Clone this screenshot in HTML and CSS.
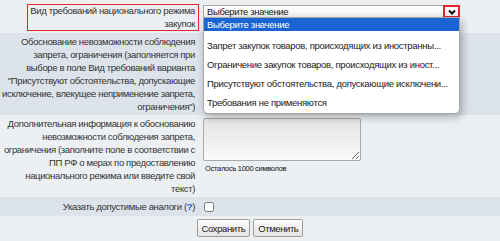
FILE: index.html
```html
<!DOCTYPE html>
<html lang="ru">
<head>
  <meta charset="UTF-8">
  <title>Национальный режим</title>
  <link rel="stylesheet" href="styles.css">
</head>
<body>

  <div class="form">
    <div class="row light first">
      <div class="label"><span class="mark">Вид требований национального режима закупок</span></div>
      <div class="field">
        <div class="select">
          <span class="select-value">Выберите значение</span>
          <span class="select-arrow">
            <svg width="8" height="6" viewBox="0 0 8 6"><polyline points="1,1.5 4,4.5 7,1.5" fill="none" stroke="#111" stroke-width="2"/></svg>
          </span>
          <ul class="options">
            <li class="selected">Выберите значение</li>
            <li>Запрет закупок товаров, происходящих из иностранны...</li>
            <li>Ограничение закупок товаров, происходящих из иност...</li>
            <li>Присутствуют обстоятельства, допускающие исключени...</li>
            <li>Требования не применяются</li>
          </ul>
        </div>
      </div>
    </div>

    <div class="row dark">
      <div class="label">Обоснование невозможности соблюдения запрета, ограничения (заполняется при выборе в поле Вид требований варианта "Присутствуют обстоятельства, допускающие исключение, влекущее неприменение запрета, ограничения")</div>
      <div class="field"></div>
    </div>

    <div class="row light">
      <div class="label">Дополнительная информация к обоснованию невозможности соблюдения запрета, ограничения (заполните поле в соответствии с ПП РФ о мерах по предоставлению национального режима или введите свой текст)</div>
      <div class="field">
        <textarea class="memo"></textarea>
        <div class="counter">Осталось 1000 символов</div>
      </div>
    </div>

    <div class="row dark short">
      <div class="label">Указать допустимые аналоги (<a href="#" class="help">?</a>)</div>
      <div class="field"><input type="checkbox" class="check"></div>
    </div>

    <div class="actions">
      <button>Сохранить</button>
      <button>Отменить</button>
    </div>
  </div>

</body>
</html>
```

FILE: styles.css
```css
body {
  margin: 0;
  background: #edf0f3;
  font-family: "Liberation Sans", Arial, sans-serif;
  font-size: 9.5px;
  letter-spacing: -0.36px;
  color: #333;
}

.row {
  display: flex;
  gap: 3px;
}

.light {
  background: #edf0f3;
}

.dark {
  background: #dde3ea;
}

.label {
  width: 200px;
  flex-shrink: 0;
  box-sizing: border-box;
  padding: 2px 5px 2px 2px;
  text-align: right;
  line-height: 13px;
}

.first .label {
  padding-top: 4px;
  padding-bottom: 2px;
  line-height: 12.5px;
}

.mark {
  display: inline-block;
  vertical-align: top;
  width: 167px;
  border: 1px solid #e3262d;
  padding: 0 3px 0 0;
  margin-right: -4px;
}

.field {
  flex: 1;
  position: relative;
}

.select {
  position: relative;
  width: 257px;
  height: 13px;
  margin-top: 5px;
  border: 1px solid #a8a8a8;
  box-sizing: border-box;
  background: linear-gradient(#fff, #f1f1f1);
}

.select-value {
  display: block;
  padding-left: 3px;
  line-height: 11px;
  color: #222;
}

.select-arrow {
  position: absolute;
  right: -1px;
  top: -1px;
  width: 17px;
  height: 13px;
  box-sizing: border-box;
  border: 2px solid #e3262d;
  display: flex;
  align-items: center;
  justify-content: center;
}

.options {
  position: absolute;
  z-index: 2;
  left: -1px;
  top: 11px;
  width: 255px;
  margin: 0;
  padding: 0 0 1px;
  list-style: none;
  background: #fff;
  border: 1px solid #a8a8a8;
  border-radius: 0 0 5px 5px;
  box-shadow: 2px 3px 9px rgba(0, 0, 0, 0.3);
  letter-spacing: -0.3px;
}

.options li {
  height: 19px;
  line-height: 19px;
  padding-left: 3px;
  white-space: nowrap;
  overflow: hidden;
  color: #222;
}

.options li.selected {
  height: 13px;
  line-height: 13px;
  margin-bottom: 5px;
  background: #1b64d3;
  color: #fff;
}

.memo {
  display: block;
  width: 158px;
  height: 43px;
  margin-top: 3px;
  box-sizing: border-box;
  border: 1px solid #a9a9a9;
  border-radius: 2px;
  background: linear-gradient(#e3e3e3, #fafafa);
  resize: both;
}

.counter {
  font-size: 7.5px;
  letter-spacing: -0.3px;
  padding: 3px 0 0 2px;
  color: #111;
}

.short .label {
  padding-top: 3px;
  padding-bottom: 3px;
}

.help {
  color: #1a5fc9;
  font-weight: bold;
  text-decoration: none;
}

.check {
  margin: 5px 0 0 1px;
  width: 10px;
  height: 10px;
}

.actions {
  display: flex;
  justify-content: center;
  gap: 3px;
  padding: 3px 0 4px;
}

.actions button {
  font-family: "Liberation Sans", Arial, sans-serif;
  font-size: 9.5px;
  letter-spacing: -0.4px;
  color: #222;
  height: 18px;
  padding: 0 4px;
  border: 1px solid #9e9e9e;
  border-radius: 2px;
  background: linear-gradient(#fdfdfd, #e3e3e3);
}
```
